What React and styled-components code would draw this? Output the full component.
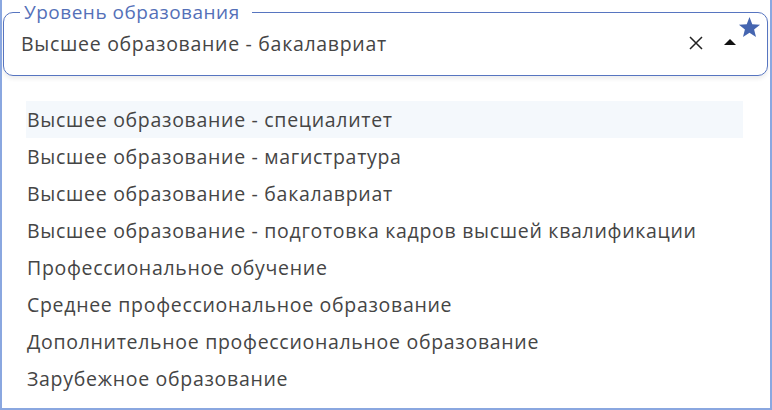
import React from "react";
import styled, { createGlobalStyle } from "styled-components";

const GlobalStyle = createGlobalStyle`
  body {
    margin: 0;
    font-family: "Open Sans", "Noto Sans", sans-serif;
    background: #ffffff;
  }
`;

const options = [
  "Высшее образование - специалитет",
  "Высшее образование - магистратура",
  "Высшее образование - бакалавриат",
  "Высшее образование - подготовка кадров высшей квалификации",
  "Профессиональное обучение",
  "Среднее профессиональное образование",
  "Дополнительное профессиональное образование",
  "Зарубежное образование",
];

const App = () => {
  return (
    <>
      <GlobalStyle />
      <Frame>
        <Field>
          <Legend>Уровень образования</Legend>
          <ValueRow>
            <Value>Высшее образование - бакалавриат</Value>
            <Clear aria-label="Очистить">
              <svg width="14" height="14" viewBox="0 0 14 14">
                <path d="M1 1 L13 13 M13 1 L1 13" stroke="#222" strokeWidth="1.5" />
              </svg>
            </Clear>
            <Arrow />
            <Star viewBox="0 0 24 24" width="23" height="23">
              <path
                d="M12 1 L14.9 8.5 L23 9 L16.8 14.1 L18.8 22 L12 17.6 L5.2 22 L7.2 14.1 L1 9 L9.1 8.5 Z"
                fill="#4565b0"
              />
            </Star>
          </ValueRow>
        </Field>
        <List>
          {options.map((item, i) => (
            <Option key={item} active={i === 0}>
              {item}
            </Option>
          ))}
        </List>
      </Frame>
    </>
  );
};

const Frame = styled.div`
  width: 772px;
  height: 410px;
  box-sizing: border-box;
  border: 2px solid #8aa7e0;
  border-top: none;
  padding: 0 2px 0 1px;
  overflow: hidden;
`;

const Field = styled.fieldset`
  margin: 2px 0 0 0;
  padding: 0 8px 0 17px;
  height: 74px;
  box-sizing: border-box;
  border: 1px solid #5775c0;
  border-radius: 10px;
  box-shadow: 0 3px 4px rgba(0, 0, 0, 0.07);
`;

const Legend = styled.legend`
  padding: 0 12px 0 4px;
  margin-left: -1px;
  font-size: 19px;
  letter-spacing: 0.5px;
  line-height: 20px;
  color: #5470b8;
`;

const ValueRow = styled.div`
  display: flex;
  align-items: center;
  height: 42px;
  position: relative;
`;

const Value = styled.div`
  flex: 1;
  font-size: 19.5px;
  letter-spacing: 0.7px;
  color: #454545;
`;

const Clear = styled.button`
  border: none;
  background: none;
  padding: 0;
  margin-right: 21px;
  display: flex;
  cursor: pointer;
`;

const Arrow = styled.span`
  width: 0;
  height: 0;
  border-left: 6px solid transparent;
  border-right: 6px solid transparent;
  border-bottom: 6px solid #111;
  margin-top: -3px;
  margin-right: 23px;
`;

const Star = styled.svg`
  position: absolute;
  right: -2px;
  top: -6px;
`;

const List = styled.ul`
  list-style: none;
  margin: 25px 0 0 23px;
  padding: 0;
  width: 717px;
`;

const Option = styled.li`
  height: 37px;
  display: flex;
  align-items: center;
  padding-left: 1px;
  font-size: 19.5px;
  letter-spacing: 0.7px;
  color: #454545;
  background: ${({ active }) => (active ? "#f4f8fc" : "transparent")};
`;

export default App;
